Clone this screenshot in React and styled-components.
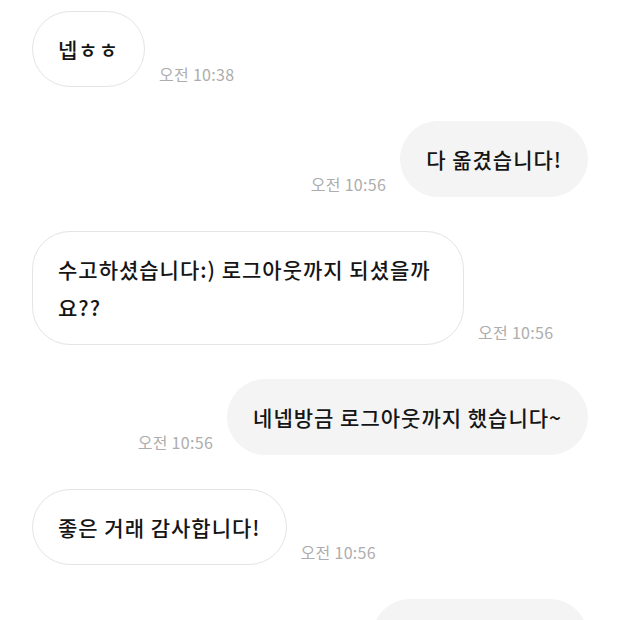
import React from 'react';
import styled, { createGlobalStyle } from 'styled-components';

const GlobalStyle = createGlobalStyle`
  html, body {
    margin: 0;
    padding: 0;
    background: #ffffff;
    overflow: hidden;
  }
  body {
    font-family: "Noto Sans CJK KR", "Noto Sans", sans-serif;
  }
`;

const ChatList = styled.div`
  display: flex;
  flex-direction: column;
  gap: 34px;
  padding: 11px 32px 0 32px;
  width: 620px;
  box-sizing: border-box;
`;

const Row = styled.div`
  display: flex;
  align-items: flex-end;
  gap: 14px;
  flex-direction: ${(p) => (p.mine ? 'row-reverse' : 'row')};
`;

const Bubble = styled.div`
  max-width: 432px;
  padding: 18px 25px;
  border-radius: 38px;
  box-sizing: border-box;
  font-size: 21px;
  line-height: 38px;
  font-weight: 500;
  color: #151515;
  letter-spacing: 1px;
  background: ${(p) => (p.mine ? '#f4f4f4' : '#ffffff')};
  border: 1px solid ${(p) => (p.mine ? '#f4f4f4' : '#e4e4e4')};
`;

const Time = styled.span`
  font-size: 16px;
  line-height: 20px;
  color: #adadad;
  margin-bottom: 3px;
  letter-spacing: 0.3px;
  white-space: nowrap;
`;

const messages = [
  { mine: false, text: '넵ㅎㅎ', time: '오전 10:38' },
  { mine: true, text: '다 옮겼습니다!', time: '오전 10:56' },
  { mine: false, text: '수고하셨습니다:) 로그아웃까지 되셨을까요??', time: '오전 10:56' },
  { mine: true, text: '네넵방금 로그아웃까지 했습니다~', time: '오전 10:56' },
  { mine: false, text: '좋은 거래 감사합니다!', time: '오전 10:56' },
  { mine: true, text: '저도 감사합니다!!' },
];

export default function App() {
  return (
    <>
      <GlobalStyle />
      <ChatList>
        {messages.map((m, i) => (
          <Row key={i} mine={m.mine}>
            <Bubble mine={m.mine}>{m.text}</Bubble>
            {m.time && <Time>{m.time}</Time>}
          </Row>
        ))}
      </ChatList>
    </>
  );
}
